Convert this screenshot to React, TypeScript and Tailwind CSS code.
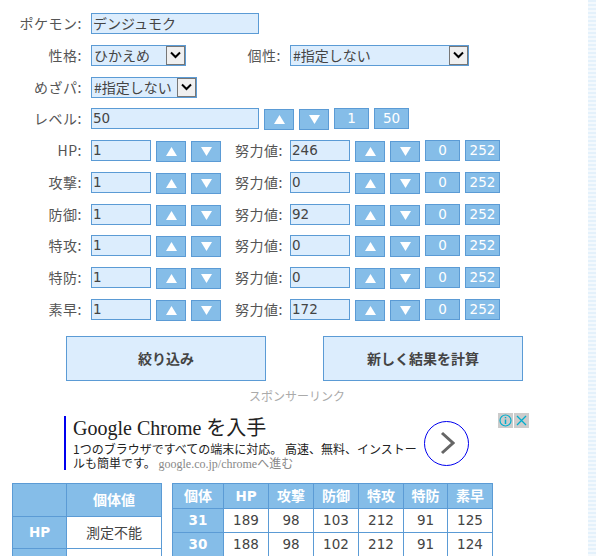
const latin = "font-['DejaVu_Sans','Noto_Sans_CJK_JP',sans-serif] text-[13.5px]";

function Field({ value, className }: { value: string; className: string }) {
  return (
    <input
      readOnly
      value={value}
      className={`h-[21px] border border-[#5b9bd5] bg-[#dcedfd] px-[1px] pb-[1px] text-[#444] outline-none ${className}`}
    />
  );
}

function Dropdown({ value, className }: { value: string; className: string }) {
  return (
    <div className={`flex h-[21px] items-stretch border border-[#5b9bd5] bg-[#dcedfd] ${className}`}>
      <span className="flex-1 overflow-hidden whitespace-nowrap pl-[2px] leading-[19px] text-[#444]">{value}</span>
      <span className="flex w-[19px] items-center justify-center border border-[#777] bg-[#f0f0f0]">
        <svg width="11" height="8" viewBox="0 0 11 8">
          <path d="M1 1.5 L5.5 6 L10 1.5" fill="none" stroke="#000" strokeWidth="2" />
        </svg>
      </span>
    </div>
  );
}

function Btn({ dir, label }: { dir?: "up" | "down"; label?: string }) {
  if (dir) {
    return (
      <button
        type="button"
        className="mt-[1px] flex h-[21px] w-[30px] items-center justify-center border border-[#5b9bd5] bg-[#85bde8]"
      >
        <svg width="11" height="9" viewBox="0 0 11 9">
          <path d={dir === "up" ? "M5.5 0 L11 9 L0 9 Z" : "M0 0 L11 0 L5.5 9 Z"} fill="#fff" />
        </svg>
      </button>
    );
  }
  return (
    <button
      type="button"
      className={`${latin} h-[21px] w-[35px] border border-[#5b9bd5] bg-[#85bde8] leading-[19px] text-white`}
    >
      {label}
    </button>
  );
}

function Label({ children, className = "w-[82px]" }: { children: React.ReactNode; className?: string }) {
  return (
    <span className={`whitespace-nowrap text-right leading-[20px] tracking-[0.5px] text-[#555] ${className}`}>
      {children}
    </span>
  );
}

const stats = [
  ["HP:", "246"],
  ["攻撃:", "0"],
  ["防御:", "92"],
  ["特攻:", "0"],
  ["特防:", "0"],
  ["素早:", "172"],
];

const results = [
  ["31", "189", "98", "103", "212", "91", "125"],
  ["30", "188", "98", "102", "212", "91", "124"],
];

const cell = "border border-[#5b9bd5]";
const head = "border border-[#5b9bd5] bg-[#85bde8] font-bold text-white";

export default function App() {
  return (
    <div className="flex h-[556px] w-[596px] overflow-hidden bg-white font-['Noto_Sans_CJK_JP',sans-serif] text-[14px]">
      <main className="w-[588px]">
        <div className="flex flex-col gap-[10.75px] pt-[13px]">
          <div className="flex h-[21px] items-start gap-[9px]">
            <Label>ポケモン:</Label>
            <Field value="デンジュモク" className="w-[168px]" />
          </div>
          <div className="flex h-[21px] items-start gap-[9px]">
            <Label>性格:</Label>
            <Dropdown value="ひかえめ" className="w-[95px]" />
            <Label className="ml-[44px] w-[42px]">個性:</Label>
            <Dropdown value="#指定しない" className="w-[179px]" />
          </div>
          <div className="flex h-[21px] items-start gap-[9px]">
            <Label>めざパ:</Label>
            <Dropdown value="#指定しない" className="w-[106px]" />
          </div>
          <div className="flex h-[21px] items-start gap-[5px]">
            <Label className="mr-[4px] w-[82px]">レベル:</Label>
            <Field value="50" className={`w-[168px] ${latin}`} />
            <Btn dir="up" />
            <Btn dir="down" />
            <Btn label="1" />
            <Btn label="50" />
          </div>
          {stats.map(([name, ev]) => (
            <div key={name} className="flex h-[21px] items-start gap-[5px]">
              <Label className="mr-[4px] w-[82px]">{name}</Label>
              <Field value="1" className={`w-[60px] ${latin}`} />
              <Btn dir="up" />
              <Btn dir="down" />
              <Label className="ml-[9px] mr-[4px] w-[46px]">努力値:</Label>
              <Field value={ev} className={`w-[60px] ${latin}`} />
              <Btn dir="up" />
              <Btn dir="down" />
              <Btn label="0" />
              <Btn label="252" />
            </div>
          ))}
        </div>

        <div className="mt-[16px] flex gap-[57px] pl-[66px]">
          <button type="button" className="h-[45px] w-[200px] border border-[#5b9bd5] bg-[#dcedfd] font-bold text-[#444]">
            絞り込み
          </button>
          <button type="button" className="h-[45px] w-[200px] border border-[#5b9bd5] bg-[#dcedfd] font-bold text-[#444]">
            新しく結果を計算
          </button>
        </div>

        <p className="mt-[6px] pl-[6px] text-center text-[12px] leading-[18px] text-[#aaa]">スポンサーリンク</p>

        <div className="relative mt-[11px] ml-[64px] flex h-[54px] w-[405px]">
          <div className="w-[405px] border-l-2 border-[#0000ee] pl-[7px]">
            <div className="font-['Liberation_Serif','Noto_Sans_CJK_JP',serif] text-[20px] leading-[25px] text-[#222]">
              Google Chrome を入手
            </div>
            <div className="mt-[1px] whitespace-nowrap text-[12px] leading-[14px] text-[#222]">
              1つのブラウザですべての端末に対応。 高速、無料、インストー
              <br />
              ルも簡単です。{" "}
              <span className="font-['Liberation_Serif','Noto_Sans_CJK_JP',serif] text-[#888]">google.co.jp/chromeへ進む</span>
            </div>
          </div>
          <div className="absolute left-[360px] top-[5px] flex h-[45px] w-[45px] items-center justify-center rounded-full border border-[#0000ee] bg-white">
            <svg width="16" height="24" viewBox="0 0 16 24">
              <path d="M3 2 L14 12 L3 22" fill="none" stroke="#666" strokeWidth="3" />
            </svg>
          </div>
          <div className="absolute left-[434px] top-[-3px] flex gap-[1px]">
            <span className="flex h-[15px] w-[15px] items-center justify-center bg-[#ccc]">
              <svg width="13" height="13" viewBox="0 0 13 13">
                <circle cx="6.5" cy="6.5" r="5.5" fill="none" stroke="#00aecd" strokeWidth="1.2" />
                <path d="M6.5 5.5 V10 M6.5 3 V4.2" stroke="#00aecd" strokeWidth="1.5" />
              </svg>
            </span>
            <span className="flex h-[15px] w-[15px] items-center justify-center bg-[#ccc]">
              <svg width="11" height="11" viewBox="0 0 11 11">
                <path d="M1 1 L10 10 M10 1 L1 10" stroke="#00aecd" strokeWidth="1.3" />
              </svg>
            </span>
          </div>
        </div>

        <div className="mt-[13px] flex items-start gap-[10px] pl-[12px]">
          <table className="w-[150px] shrink-0 table-fixed border-collapse text-center">
            <tbody>
              <tr className="h-[33px]">
                <td className={`${head} w-[54px]`} />
                <td className={head}>個体値</td>
              </tr>
              <tr className="h-[32px]">
                <td className={`${head} ${latin}`}>HP</td>
                <td className={`${cell} text-[#444]`}>測定不能</td>
              </tr>
              <tr className="h-[32px]">
                <td className={head} />
                <td className={cell} />
              </tr>
            </tbody>
          </table>
          <table className="w-[320px] shrink-0 table-fixed border-collapse text-center">
            <tbody>
              <tr className="h-[25px]">
                <td className={`${head} w-[51px]`}>個体</td>
                <td className={`${head} ${latin} w-[45px]`}>HP</td>
                <td className={`${head} w-[45px]`}>攻撃</td>
                <td className={`${head} w-[45px]`}>防御</td>
                <td className={`${head} w-[45px]`}>特攻</td>
                <td className={`${head} w-[44px]`}>特防</td>
                <td className={`${head} w-[45px]`}>素早</td>
              </tr>
              {results.map((row) => (
                <tr key={row[0]} className="h-[24px]">
                  {row.map((v, i) => (
                    <td key={i} className={i === 0 ? `${head} ${latin}` : `${cell} ${latin} text-[#444]`}>
                      {v}
                    </td>
                  ))}
                </tr>
              ))}
            </tbody>
          </table>
        </div>
      </main>
      <aside className="w-[8px] bg-[repeating-linear-gradient(180deg,#e4f1fb_0,#e4f1fb_2px,#f4f9fd_2px,#f4f9fd_4px)]" />
    </div>
  );
}
